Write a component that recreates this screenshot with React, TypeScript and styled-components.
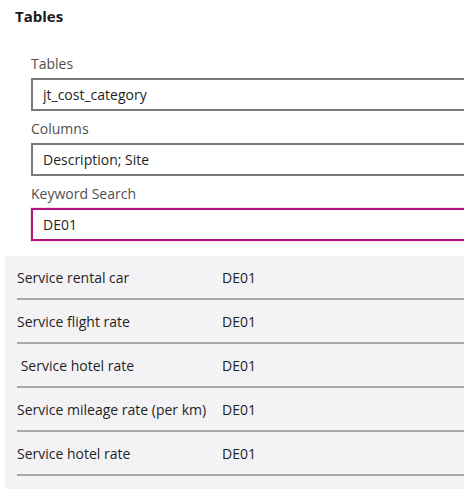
import React from 'react';
import styled, { createGlobalStyle } from 'styled-components';

const GlobalStyle = createGlobalStyle`
  html, body {
    margin: 0;
    padding: 0;
    background: #ffffff;
    overflow: hidden;
  }
  body {
    font-family: 'Segoe UI', 'Open Sans', 'Noto Sans', sans-serif;
    color: #1f1f1f;
  }
`;

const Page = styled.div`
  width: 464px;
  height: 489px;
  overflow: hidden;
  display: flex;
  flex-direction: column;
`;

const Title = styled.h1`
  margin: 0;
  padding: 6px 15px 5px;
  font-size: 15px;
  line-height: 20px;
  font-weight: 700;
  color: #1a1a1a;
`;

const Form = styled.div`
  padding: 15px 0 0 31px;
  display: flex;
  flex-direction: column;
`;

const Label = styled.label`
  display: block;
  padding-top: 8px;
  margin-bottom: 4px;
  font-size: 14px;
  line-height: 20px;
  color: #505050;
`;

const Input = styled.input<{ $focused?: boolean }>`
  box-sizing: border-box;
  width: 470px;
  height: 33px;
  margin: 0;
  padding: 0 10px;
  border: 2px solid ${(p) => (p.$focused ? '#b3137f' : '#7a7a7a')};
  box-shadow: ${(p) => (p.$focused ? '0 0 0 1px rgba(179, 19, 127, 0.12)' : 'none')};
  border-radius: 0;
  background: #ffffff;
  font-family: inherit;
  font-size: 14px;
  color: #1f1f1f;
  outline: none;
`;

const Results = styled.div`
  margin: 15px 0 0 5px;
  width: 480px;
  flex: 1;
  background: #f3f2f5;
  padding-left: 12px;
`;

const Row = styled.div`
  display: grid;
  grid-template-columns: 205px 1fr;
  align-items: center;
  height: 42px;
  border-bottom: 2px solid #a9a9ab;
  font-size: 14px;
  color: #1f1f1f;
  white-space: pre;
`;

const rows = [
  ['Service rental car', 'DE01'],
  ['Service flight rate', 'DE01'],
  [' Service hotel rate', 'DE01'],
  ['Service mileage rate (per km)', 'DE01'],
  ['Service hotel rate', 'DE01'],
];

export default function App() {
  return (
    <Page>
      <GlobalStyle />
      <Title>Tables</Title>
      <Form>
        <Label>Tables</Label>
        <Input readOnly value="jt_cost_category" />
        <Label>Columns</Label>
        <Input readOnly value="Description; Site" />
        <Label>Keyword Search</Label>
        <Input readOnly $focused value="DE01" />
      </Form>
      <Results>
        {rows.map(([name, site], i) => (
          <Row key={i}>
            <span>{name}</span>
            <span>{site}</span>
          </Row>
        ))}
      </Results>
    </Page>
  );
}
